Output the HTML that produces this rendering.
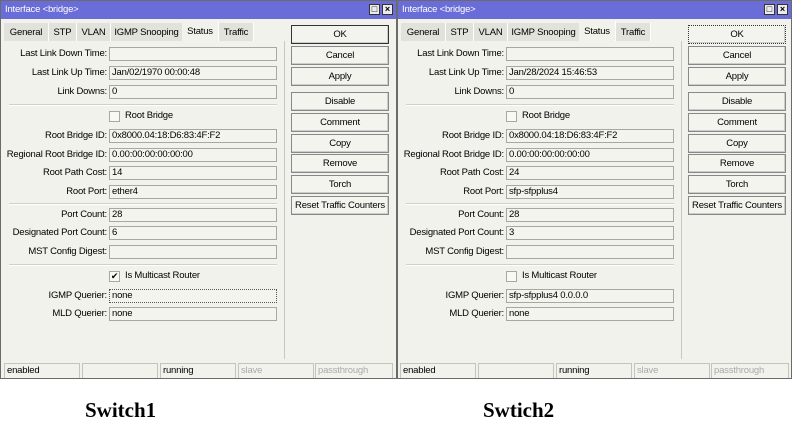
<!DOCTYPE html>
<html><head><style>
body{margin:0;width:792px;height:435px;background:#fff;position:relative;overflow:hidden;font-family:"Liberation Sans",sans-serif;font-size:9.5px;letter-spacing:-0.2px;color:#000}
.win{position:absolute;top:0;height:379px;background:#f2f2ec;border:1px solid #6b6b6b;box-sizing:border-box}
.title{position:absolute;left:0;right:0;top:0;height:18px;background:#6a6cd8;color:#fff;font-size:9.5px;line-height:18px;padding-left:4px}
.tb{position:absolute;top:3px;width:11px;height:11px;background:#ececec;border:1px solid #333;box-sizing:border-box;font-size:9px;line-height:9px;text-align:center;color:#000;font-weight:bold;letter-spacing:0}
.tabs{position:absolute;top:22px;left:3px;height:18px}
.tab{position:absolute;top:0;height:18px;background:#e2e2dc;border-right:1px solid #fff;line-height:19px;text-align:center;white-space:nowrap}
.tab.act{background:#f2f2ec;top:-2px;height:20px;line-height:21px}
.panel{position:absolute;left:3px;top:40px;width:280px;height:318px;border-right:1px solid #c8c8c0}
.lbl{position:absolute;right:177px;text-align:right;white-space:nowrap;line-height:14px}
.in{position:absolute;left:105px;width:168px;height:14px;border:1px solid #a8a8a0;background:#f4f4ee;box-sizing:border-box;line-height:12px;padding-left:2px;white-space:nowrap}
.sep{position:absolute;left:5px;width:268px;height:0;border-top:1px solid #d0d0c8;border-bottom:1px solid #fff}
.cb{position:absolute;left:105px;width:11px;height:11px;border:1px solid #a8a8a0;background:#f8f8f4;box-sizing:border-box;font-size:9px;line-height:9px;text-align:center}
.cbl{position:absolute;left:121px;line-height:12px;white-space:nowrap}
.btn{position:absolute;left:290px;width:98px;height:19px;border:1px solid #888;background:#f4f4ee;box-sizing:border-box;text-align:center;line-height:17px;white-space:nowrap;box-shadow:inset -1px -1px 0 #ccc}
.st{position:absolute;top:362px;height:15px;border:1px solid #c4c4bc;border-bottom:none;box-sizing:border-box;line-height:14px;padding-left:2px;background:#f2f2ec}
.cap{position:absolute;top:398px;font-family:"Liberation Serif",serif;font-weight:bold;font-size:21px;letter-spacing:0}
</style></head><body>

<div class="win" style="left:0;width:397px">
<div class="title">Interface &lt;bridge&gt;<div class="tb" style="right:16px">□</div><div class="tb" style="right:3px">×</div></div>
<div class="tabs">
<div class="tab" style="left:0;width:44px">General</div><div class="tab" style="left:45px;width:27px">STP</div><div class="tab" style="left:73px;width:33px">VLAN</div><div class="tab" style="left:107px;width:71px">IGMP Snooping</div><div class="tab act" style="left:178px;width:36px">Status</div><div class="tab" style="left:215px;width:34px">Traffic</div>
</div>
<div class="panel">
<div class="lbl" style="top:6px">Last Link Down Time:</div><div class="in" style="top:6px"></div>
<div class="lbl" style="top:25px">Last Link Up Time:</div><div class="in" style="top:25px">Jan/02/1970 00:00:48</div>
<div class="lbl" style="top:44px">Link Downs:</div><div class="in" style="top:44px">0</div>
<div class="sep" style="top:63px"></div>
<div class="cb" style="top:70px"></div><div class="cbl" style="top:69px">Root Bridge</div>
<div class="lbl" style="top:88px">Root Bridge ID:</div><div class="in" style="top:88px">0x8000.04:18:D6:83:4F:F2</div>
<div class="lbl" style="top:107px">Regional Root Bridge ID:</div><div class="in" style="top:107px">0.00:00:00:00:00:00</div>
<div class="lbl" style="top:125px">Root Path Cost:</div><div class="in" style="top:125px">14</div>
<div class="lbl" style="top:144px">Root Port:</div><div class="in" style="top:144px">ether4</div>
<div class="sep" style="top:162px"></div>
<div class="lbl" style="top:167px">Port Count:</div><div class="in" style="top:167px">28</div>
<div class="lbl" style="top:185px">Designated Port Count:</div><div class="in" style="top:185px">6</div>
<div class="lbl" style="top:204px">MST Config Digest:</div><div class="in" style="top:204px"></div>
<div class="sep" style="top:223px"></div>
<div class="cb" style="top:230px">✔</div><div class="cbl" style="top:229px">Is Multicast Router</div>
<div class="lbl" style="top:248px">IGMP Querier:</div><div class="in" style="top:248px;border:1px dotted #555">none</div>
<div class="lbl" style="top:266px">MLD Querier:</div><div class="in" style="top:266px">none</div>
</div>
<div class="btn" style="top:24px;border-color:#333">OK</div>
<div class="btn" style="top:45px">Cancel</div>
<div class="btn" style="top:66px">Apply</div>
<div class="btn" style="top:91px">Disable</div>
<div class="btn" style="top:112px">Comment</div>
<div class="btn" style="top:133px">Copy</div>
<div class="btn" style="top:153px">Remove</div>
<div class="btn" style="top:174px">Torch</div>
<div class="btn" style="top:195px">Reset Traffic Counters</div>
<div class="st" style="left:3px;width:76px">enabled</div>
<div class="st" style="left:81px;width:76px"></div>
<div class="st" style="left:159px;width:76px">running</div>
<div class="st" style="left:237px;width:76px;color:#aaa">slave</div>
<div class="st" style="left:314px;width:78px;color:#aaa">passthrough</div>
</div>

<div class="win" style="left:397px;width:395px">
<div class="title">Interface &lt;bridge&gt;<div class="tb" style="right:16px">□</div><div class="tb" style="right:3px">×</div></div>
<div class="tabs">
<div class="tab" style="left:0;width:44px">General</div><div class="tab" style="left:45px;width:27px">STP</div><div class="tab" style="left:73px;width:33px">VLAN</div><div class="tab" style="left:107px;width:71px">IGMP Snooping</div><div class="tab act" style="left:178px;width:36px">Status</div><div class="tab" style="left:215px;width:34px">Traffic</div>
</div>
<div class="panel">
<div class="lbl" style="top:6px">Last Link Down Time:</div><div class="in" style="top:6px"></div>
<div class="lbl" style="top:25px">Last Link Up Time:</div><div class="in" style="top:25px">Jan/28/2024 15:46:53</div>
<div class="lbl" style="top:44px">Link Downs:</div><div class="in" style="top:44px">0</div>
<div class="sep" style="top:63px"></div>
<div class="cb" style="top:70px"></div><div class="cbl" style="top:69px">Root Bridge</div>
<div class="lbl" style="top:88px">Root Bridge ID:</div><div class="in" style="top:88px">0x8000.04:18:D6:83:4F:F2</div>
<div class="lbl" style="top:107px">Regional Root Bridge ID:</div><div class="in" style="top:107px">0.00:00:00:00:00:00</div>
<div class="lbl" style="top:125px">Root Path Cost:</div><div class="in" style="top:125px">24</div>
<div class="lbl" style="top:144px">Root Port:</div><div class="in" style="top:144px">sfp-sfpplus4</div>
<div class="sep" style="top:162px"></div>
<div class="lbl" style="top:167px">Port Count:</div><div class="in" style="top:167px">28</div>
<div class="lbl" style="top:185px">Designated Port Count:</div><div class="in" style="top:185px">3</div>
<div class="lbl" style="top:204px">MST Config Digest:</div><div class="in" style="top:204px"></div>
<div class="sep" style="top:223px"></div>
<div class="cb" style="top:230px"></div><div class="cbl" style="top:229px">Is Multicast Router</div>
<div class="lbl" style="top:248px">IGMP Querier:</div><div class="in" style="top:248px">sfp-sfpplus4 0.0.0.0</div>
<div class="lbl" style="top:266px">MLD Querier:</div><div class="in" style="top:266px">none</div>
</div>
<div class="btn" style="top:24px;border:1px dotted #333">OK</div>
<div class="btn" style="top:45px">Cancel</div>
<div class="btn" style="top:66px">Apply</div>
<div class="btn" style="top:91px">Disable</div>
<div class="btn" style="top:112px">Comment</div>
<div class="btn" style="top:133px">Copy</div>
<div class="btn" style="top:153px">Remove</div>
<div class="btn" style="top:174px">Torch</div>
<div class="btn" style="top:195px">Reset Traffic Counters</div>
<div class="st" style="left:2px;width:76px">enabled</div>
<div class="st" style="left:80px;width:76px"></div>
<div class="st" style="left:158px;width:76px">running</div>
<div class="st" style="left:236px;width:76px;color:#aaa">slave</div>
<div class="st" style="left:313px;width:78px;color:#aaa">passthrough</div>
</div>

<div class="cap" style="left:85px">Switch1</div>
<div class="cap" style="left:483px">Swtich2</div>
</body></html>
